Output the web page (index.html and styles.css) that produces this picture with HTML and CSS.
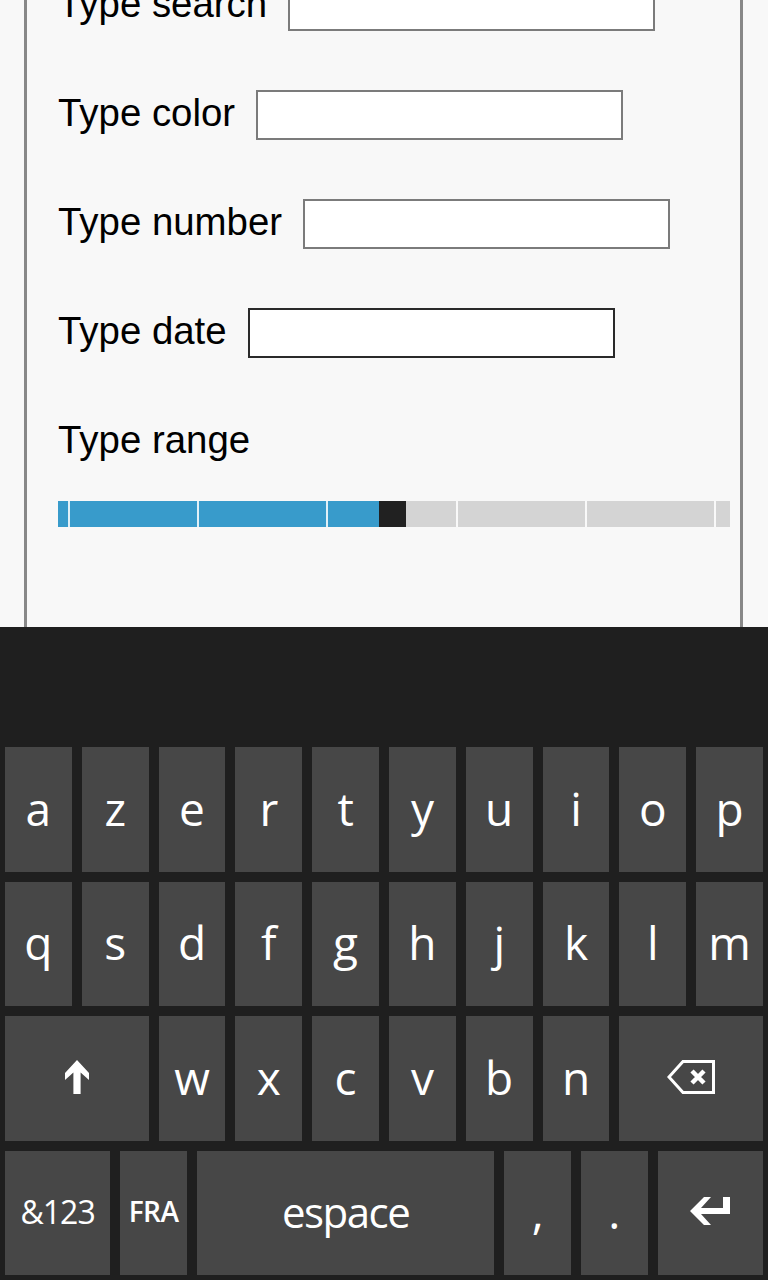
FILE: index.html
```html
<!DOCTYPE html>
<html lang="fr">
<head>
<meta charset="utf-8">
<title>Input types</title>
<link rel="stylesheet" href="styles.css">
</head>
<body>
<div class="screen">
  <div class="viewport">
    <form class="panel">
      <div class="row"><label class="lbl">Type search</label><input class="field" type="text"></div>
      <div class="row"><label class="lbl">Type color</label><input class="field" type="text"></div>
      <div class="row"><label class="lbl">Type number</label><input class="field" type="text"></div>
      <div class="row"><label class="lbl">Type date</label><input class="field field-focus" type="text"></div>
      <div class="row row-range"><label class="lbl">Type range</label></div>
      <div class="range">
        <div class="fill"></div>
        <div class="thumb"></div>
        <div class="rest"></div>
        <div class="ticks"></div>
      </div>
    </form>
  </div>
  <div class="keyboard">
    <div class="suggest"></div>
    <div class="keys">
      <div class="key">a</div><div class="key">z</div><div class="key">e</div><div class="key">r</div><div class="key">t</div>
      <div class="key">y</div><div class="key">u</div><div class="key">i</div><div class="key">o</div><div class="key">p</div>
      <div class="key">q</div><div class="key">s</div><div class="key">d</div><div class="key">f</div><div class="key">g</div>
      <div class="key">h</div><div class="key">j</div><div class="key">k</div><div class="key">l</div><div class="key">m</div>
      <div class="key w4"><svg width="24" height="34" viewBox="0 0 24 34"><path d="M12 0 L24 13 L24 20 L15.6 12.5 L15.6 34 L8.4 34 L8.4 12.5 L0 20 L0 13 Z" fill="#fff"/></svg></div>
      <div class="key">w</div><div class="key">x</div><div class="key">c</div><div class="key">v</div><div class="key">b</div><div class="key">n</div>
      <div class="key w4"><svg width="48" height="34" viewBox="0 0 48 34"><path d="M16 1.5 H46.5 V32.5 H16 L2 17 Z" fill="none" stroke="#fff" stroke-width="3" stroke-linejoin="miter"/><path d="M25 11 L37 23 M37 11 L25 23" stroke="#fff" stroke-width="4.5" fill="none"/></svg></div>
      <div class="key w3 small">&amp;123</div>
      <div class="key lang">FRA</div>
      <div class="key w8 space">espace</div>
      <div class="key">,</div>
      <div class="key">.</div>
      <div class="key w3"><svg width="40" height="28" viewBox="0 0 40 28"><path d="M0 14 L14 0 L21 0 L11 11 L33 11 L33 0 L40 0 L40 17 L11 17 L21 28 L14 28 Z" fill="#fff"/></svg></div>
    </div>
  </div>
</div>
</body>
</html>
```
FILE: styles.css
```css
html, body {
  margin: 0;
  padding: 0;
}
body {
  background: #f8f8f8;
  overflow: hidden;
}
.screen {
  width: 768px;
  height: 1280px;
  display: flex;
  flex-direction: column;
  overflow: hidden;
}
.viewport {
  height: 627px;
  flex: none;
  overflow: hidden;
  background: #f8f8f8;
}
.panel {
  margin: -19px 0 0 24px;
  width: 719px;
  height: 700px;
  box-sizing: border-box;
  border-left: 3px solid #888;
  border-right: 3px solid #888;
  padding-left: 31px;
  font-family: "Liberation Sans", Arial, sans-serif;
  font-size: 38.4px;
  color: #000;
}
.row {
  display: flex;
  align-items: center;
  gap: 21px;
  height: 50px;
  margin-bottom: 59px;
}
.row-range {
  margin-bottom: 34px;
}
.lbl {
  line-height: 44px;
  padding-bottom: 5px;
  white-space: nowrap;
}
.field {
  width: 367px;
  height: 50px;
  box-sizing: border-box;
  margin: 0;
  padding: 0;
  border: 2px solid #7b7b7b;
  background: #fff;
  outline: none;
}
.field-focus {
  border-color: #2a2a2a;
}
.range {
  position: relative;
  margin-left: 0;
  width: 672px;
  height: 26px;
  display: flex;
}
.fill {
  width: 321px;
  background: #389bcb;
}
.thumb {
  width: 27px;
  background: #212121;
}
.rest {
  flex: 1;
  background: #d4d4d4;
}
.ticks {
  position: absolute;
  left: 10px;
  top: 0;
  width: 660px;
  height: 26px;
  background: repeating-linear-gradient(to right, rgba(255,255,255,0.85) 0 2px, transparent 2px 129.2px);
}
.keyboard {
  flex: 1;
  background: #1f1f1f;
  display: flex;
  flex-direction: column;
}
.suggest {
  height: 115px;
  flex: none;
}
.keys {
  display: grid;
  grid-template-columns: repeat(20, 1fr);
  grid-template-rows: repeat(4, 134.5px);
}
.key {
  grid-column: span 2;
  margin: 5px;
  background: #474747;
  color: #fff;
  display: flex;
  align-items: center;
  justify-content: center;
  font-family: "Open Sans", "Noto Sans", sans-serif;
  font-size: 46px;
  font-weight: 500;
  padding-bottom: 3px;
  box-sizing: border-box;
}
.w3 { grid-column: span 3; }
.w4 { grid-column: span 4; }
.w8 { grid-column: span 8; }
.key svg {
  display: block;
}
.small {
  font-size: 32px;
  font-weight: 400;
  letter-spacing: -1px;
}
.lang {
  font-size: 28px;
  font-weight: 600;
  letter-spacing: -0.5px;
}
.space {
  font-size: 42px;
  font-weight: 400;
  letter-spacing: -1.5px;
}
```
